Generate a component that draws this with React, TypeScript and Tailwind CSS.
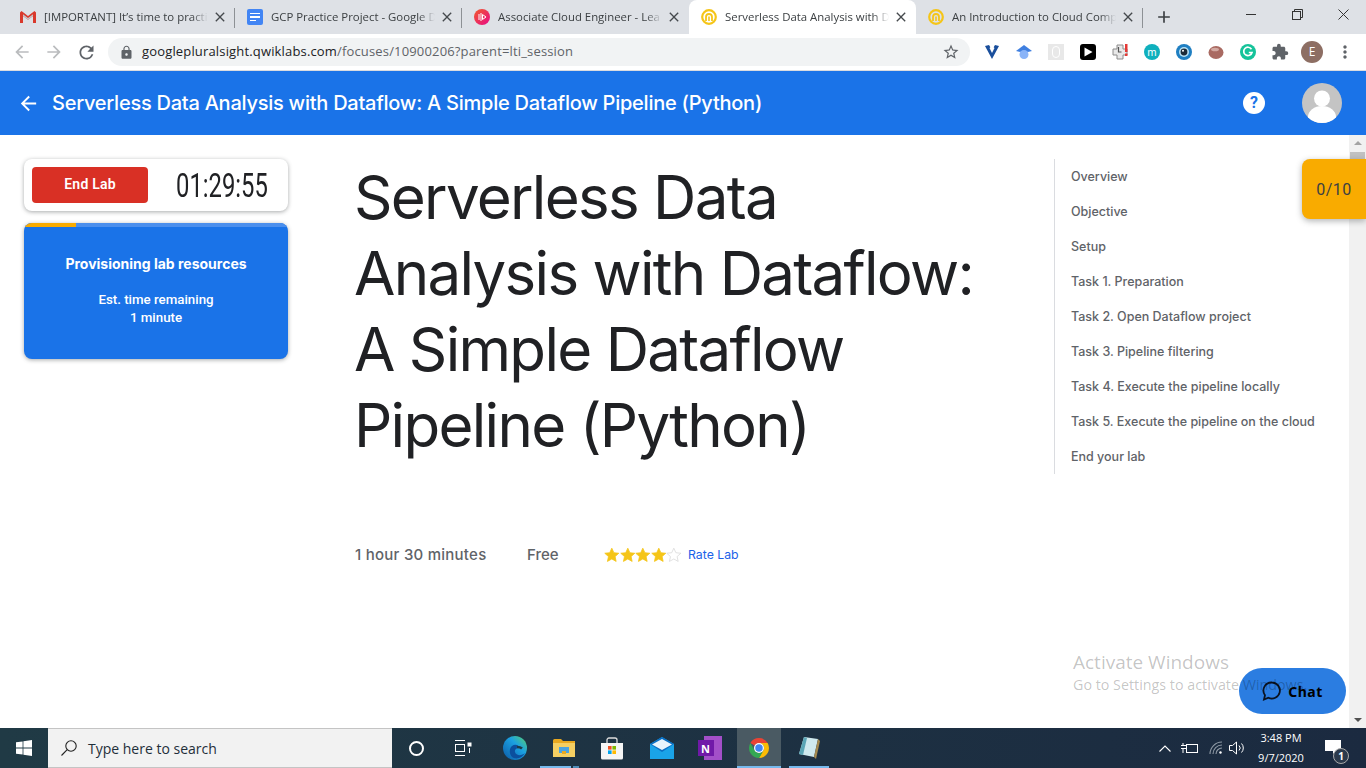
import { MdArrowBack, MdArrowForward, MdRefresh, MdLock, MdStarBorder, MdExtension, MdMoreVert, MdClose, MdAdd } from 'react-icons/md';

const uiFont = "font-['Open_Sans','Noto_Sans',sans-serif]";

function GmailIcon() {
  return (
    <svg width="16" height="12" viewBox="0 0 16 12">
      <path d="M0 1.5 L0 12 L3 12 L3 5 L8 8.8 L13 5 L13 12 L16 12 L16 1.5 L14.5 0 L8 5 L1.5 0 Z" fill="#d9392c" />
      <path d="M3 5 L3 3.2 L8 7 L13 3.2 L13 5 L8 8.8 Z" fill="#c5c6c9" />
    </svg>
  );
}

function DocsIcon() {
  return (
    <div className="w-4 h-4 rounded-[2px] bg-[#4285f4] flex flex-col gap-[2px] justify-center px-[3px]">
      <div className="h-[1.5px] bg-white" />
      <div className="h-[1.5px] bg-white" />
      <div className="h-[1.5px] w-[6px] bg-white" />
    </div>
  );
}

function PluralIcon() {
  return (
    <svg width="16" height="16" viewBox="0 0 16 16">
      <defs>
        <linearGradient id="ps" x1="0" y1="0" x2="1" y2="1">
          <stop offset="0" stopColor="#f15b2a" />
          <stop offset="1" stopColor="#e80a89" />
        </linearGradient>
      </defs>
      <circle cx="8" cy="8" r="8" fill="url(#ps)" />
      <path d="M5 5v6M7 4v8" stroke="#fff" strokeWidth="1" />
      <path d="M8.5 5.5 L12 8 L8.5 10.5 Z" fill="none" stroke="#fff" strokeWidth="1" />
    </svg>
  );
}

function QwikIcon() {
  return (
    <svg width="16" height="16" viewBox="0 0 16 16">
      <circle cx="8" cy="8" r="6.8" fill="none" stroke="#f5c518" strokeWidth="2.2" />
      <path d="M5 12V8a3 3 0 0 1 6 0v4" fill="none" stroke="#f5c518" strokeWidth="1.8" />
      <path d="M8 7.5V12" stroke="#f5c518" strokeWidth="1.6" />
    </svg>
  );
}

type TabProps = { icon: React.ReactNode; title: string; active?: boolean; sep?: boolean };

function Tab({ icon, title, active, sep }: TabProps) {
  return (
    <div className={`relative w-[227px] h-[34px] shrink-0 flex items-center pl-3 pr-[7px] ${active ? 'bg-white rounded-t-lg' : ''}`}>
      <div className="w-4 flex justify-center shrink-0">{icon}</div>
      <span className="ml-2 flex-1 whitespace-nowrap overflow-hidden text-[11.4px] text-[#3c4043] [mask-image:linear-gradient(to_right,black_90%,transparent)]">{title}</span>
      <MdClose className="ml-1 shrink-0 text-[#45494d]" size={16} />
      {sep && <div className="absolute right-0 top-[8px] h-[20px] w-px bg-[#8d9195]" />}
    </div>
  );
}

function ExtSlot({ children }: { children: React.ReactNode }) {
  return <div className="w-8 h-8 flex items-center justify-center shrink-0">{children}</div>;
}

function Extensions() {
  return (
    <div className="flex items-center ml-[6px]">
      <ExtSlot>
        <svg width="16" height="16" viewBox="0 0 16 16">
          <path d="M1 2 L5 1 L8 6 L11 1 L15 2 L8 15 Z" fill="#1a4f9c" />
          <path d="M5.5 4 L8 9 L10.5 4 L8 2 Z" fill="#fff" />
        </svg>
      </ExtSlot>
      <ExtSlot>
        <svg width="16" height="16" viewBox="0 0 16 16">
          <path d="M8 1 L16 7 L8 9 L0 7 Z" fill="#3f7fe0" />
          <circle cx="8" cy="10.5" r="4.5" fill="#8ab4f8" />
        </svg>
      </ExtSlot>
      <ExtSlot>
        <div className="w-4 h-4 bg-[#e8e8e8] flex items-center justify-center">
          <div className="w-2 h-3 rounded-full border border-white" />
        </div>
      </ExtSlot>
      <ExtSlot>
        <div className="w-4 h-4 rounded-[3px] bg-black flex items-center justify-center">
          <svg width="10" height="10" viewBox="0 0 10 10"><path d="M1.5 0.5 L9.5 5 L1.5 9.5 Z" fill="#fff" /></svg>
        </div>
      </ExtSlot>
      <ExtSlot>
        <svg width="16" height="16" viewBox="0 0 16 16">
          <path d="M5 1h6v4h4v6h-4v4H5v-4H1V5h4Z" fill="#e8e8e8" stroke="#8c8c8c" strokeWidth="1" />
          <path d="M6.5 3v5h3" fill="none" stroke="#555" strokeWidth="1.2" />
          <rect x="13" y="0" width="2.5" height="8" fill="#e53935" />
          <rect x="13" y="9.5" width="2.5" height="2.5" fill="#e53935" />
        </svg>
      </ExtSlot>
      <ExtSlot>
        <div className="w-4 h-4 rounded-full bg-[#0fb0bd] flex items-center justify-center text-white text-[10px] leading-none font-['Noto_Sans',sans-serif]">m</div>
      </ExtSlot>
      <ExtSlot>
        <svg width="16" height="16" viewBox="0 0 16 16">
          <circle cx="8" cy="8" r="8" fill="#1f7fc2" />
          <circle cx="8" cy="8" r="5" fill="#b9e2f5" />
          <circle cx="8" cy="8" r="3.4" fill="#1d2b38" />
          <circle cx="7" cy="6.8" r="1" fill="#fff" />
        </svg>
      </ExtSlot>
      <ExtSlot>
        <svg width="16" height="14" viewBox="0 0 16 14">
          <ellipse cx="8" cy="7.5" rx="7.5" ry="6.5" fill="#a96a62" />
          <ellipse cx="7" cy="4.5" rx="4" ry="1.8" fill="#d3a9a2" />
        </svg>
      </ExtSlot>
      <ExtSlot>
        <svg width="16" height="16" viewBox="0 0 16 16">
          <circle cx="8" cy="8" r="8" fill="#15c39a" />
          <path d="M11.5 5.2A4.2 4.2 0 1 0 12 8.5H8.8" fill="none" stroke="#fff" strokeWidth="1.7" />
        </svg>
      </ExtSlot>
      <ExtSlot>
        <MdExtension className="text-[#5f6368]" size={18} />
      </ExtSlot>
      <div className="w-8 h-8 flex items-center justify-center shrink-0">
        <div className={`w-[22px] h-[22px] rounded-full bg-[#8d6e63] flex items-center justify-center text-white text-[12px] ${uiFont}`}>E</div>
      </div>
      <MdMoreVert className="ml-[7px] text-[#5f6368]" size={20} />
    </div>
  );
}

function BrowserChrome() {
  return (
    <div className={`shrink-0 ${uiFont}`}>
      <div className="h-[34px] bg-[#dee1e6] flex pl-2">
        <Tab icon={<GmailIcon />} title="[IMPORTANT] It’s time to practi" sep />
        <Tab icon={<DocsIcon />} title="GCP Practice Project - Google D" sep />
        <Tab icon={<PluralIcon />} title="Associate Cloud Engineer - Lea" />
        <Tab icon={<QwikIcon />} title="Serverless Data Analysis with D" active />
        <Tab icon={<QwikIcon />} title="An Introduction to Cloud Comp" sep />
        <div className="w-[42px] h-[34px] flex items-center justify-center">
          <MdAdd className="text-[#3c4043]" size={20} />
        </div>
        <div className="ml-auto flex h-[28px] text-[#3c4043]">
          <div className="w-[46px] flex items-center justify-center">
            <div className="w-[10px] h-px bg-[#333]" />
          </div>
          <div className="w-[46px] flex items-center justify-center">
            <svg width="11" height="11" viewBox="0 0 11 11" fill="none" stroke="#333">
              <rect x="0.5" y="2.5" width="8" height="8" />
              <path d="M2.5 2.5V0.5H10.5V8.5H8.5" />
            </svg>
          </div>
          <div className="w-[46px] flex items-center justify-center">
            <svg width="11" height="11" viewBox="0 0 11 11" stroke="#333"><path d="M0.5 0.5 L10.5 10.5 M10.5 0.5 L0.5 10.5" /></svg>
          </div>
        </div>
      </div>
      <div className="h-[37px] bg-white flex items-center border-b border-[#dadce0]">
        <div className="w-[108px] flex items-center pl-[12px] gap-[12px] shrink-0">
          <MdArrowBack className="text-[#babcbe]" size={20} />
          <MdArrowForward className="text-[#babcbe]" size={20} />
          <MdRefresh className="text-[#5f6368]" size={21} />
        </div>
        <div className="w-[862px] h-[28px] rounded-full bg-[#f1f3f4] flex items-center pl-[11px] pr-[10px] shrink-0">
          <MdLock className="text-[#5f6368]" size={15} />
          <span className="ml-[8px] text-[13px] text-[#202124] tracking-[0.16px]">
            googlepluralsight.qwiklabs.com<span className="text-[#5f6368]">/focuses/10900206?parent=lti_session</span>
          </span>
          <MdStarBorder className="ml-auto text-[#5f6368]" size={18} />
        </div>
        <Extensions />
      </div>
    </div>
  );
}

function Star({ filled }: { filled: boolean }) {
  return (
    <svg width="16" height="16" viewBox="0 0 24 24" className="w-[15.6px]">
      <path
        d="M12 1.5l3.2 7 7.6.8-5.7 5.1 1.6 7.5L12 18.1l-6.7 3.8 1.6-7.5L1.2 9.3l7.6-.8Z"
        fill={filled ? '#f5c518' : '#fff'}
        stroke={filled ? '#f5c518' : '#d8d8d8'}
        strokeWidth="1.2"
      />
    </svg>
  );
}

const tocItems = [
  'Overview',
  'Objective',
  'Setup',
  'Task 1. Preparation',
  'Task 2. Open Dataflow project',
  'Task 3. Pipeline filtering',
  'Task 4. Execute the pipeline locally',
  'Task 5. Execute the pipeline on the cloud',
  'End your lab',
];

function LabContent() {
  return (
    <div className="relative flex-1 min-h-0 flex bg-white font-['Inter',sans-serif]">
      <div className="flex-1 flex pt-6 pl-6 min-w-0">
        <aside className="w-[264px] shrink-0">
          <div className="h-[52px] rounded-lg bg-white shadow-[0_1px_4px_rgba(60,64,67,0.45)] flex items-center pl-2">
            <div className="w-[116px] h-9 shrink-0 rounded bg-[#d93025] flex items-center justify-center pb-px text-white text-[14px] font-semibold font-['Roboto',sans-serif] tracking-[0.2px]">End Lab</div>
            <div className="ml-[28px] shrink-0 inline-block origin-left scale-x-[0.7] text-[34px] leading-none text-[#202124] font-['Roboto',sans-serif] whitespace-nowrap">01:29:55</div>
          </div>
          <div className="mt-3 h-[136px] rounded-lg overflow-hidden bg-[#1a73e8] shadow-[0_1px_4px_rgba(60,64,67,0.45)] text-white text-center">
            <div className="h-1 bg-[#4b8fed]">
              <div className="h-1 w-[52px] bg-[#f9ab00]" />
            </div>
            <div className="mt-[27px] text-[14px] leading-5 font-bold">Provisioning lab resources</div>
            <div className="mt-[17px] text-[13.3px] leading-[18px] font-medium font-['Roboto',sans-serif]">
              Est. time remaining
              <br />1 minute
            </div>
          </div>
        </aside>
        <main className="ml-[66px] w-[701px] shrink-0">
          <h1 className="w-[650px] text-[60px] leading-[76px] tracking-[-1.7px] text-[#202124] font-normal">
            Serverless Data Analysis with Dataflow: A Simple Dataflow Pipeline (Python)
          </h1>
          <div className="mt-[81px] pl-px flex items-center text-[#5f6368]">
            <span className="w-[172px] text-[15px] font-medium tracking-[0.25px] whitespace-nowrap">1 hour 30 minutes</span>
            <span className="w-[77px] text-[15px] font-medium">Free</span>
            <div className="flex">
              <Star filled />
              <Star filled />
              <Star filled />
              <Star filled />
              <Star filled={false} />
            </div>
            <span className="ml-[6px] text-[12.3px] text-[#1a62e8]">Rate Lab</span>
          </div>
        </main>
        <nav className="ml-[-1px] w-[295px] h-[315px] border-l border-[#dadce0] pl-[16px] pt-px flex flex-col text-[12.5px] text-[#5f6368] font-medium">
          {tocItems.map((item) => (
            <div key={item} className="h-[35px] shrink-0 flex items-center whitespace-nowrap">{item}</div>
          ))}
        </nav>
      </div>
      <div className="w-[17px] shrink-0 bg-[#f1f1f1] flex flex-col items-center justify-between py-[6px] relative">
        <div className="flex flex-col items-center">
          <div className="w-0 h-0 border-x-[4px] border-x-transparent border-b-[4px] border-b-[#a3a3a3]" />
          <div className="mt-[7px] w-[15px] h-[60px] bg-[#c1c1c1]" />
        </div>
        <div className="w-0 h-0 border-x-[4px] border-x-transparent border-t-[4px] border-t-[#505050]" />
      </div>
      <div className="absolute right-0 top-[24px] w-16 h-[60px] pt-px rounded-l-lg bg-[#f9ab00] shadow-[0_2px_6px_rgba(60,64,67,0.4)] flex items-center justify-center text-[16px] text-[#3c4043] font-['Roboto',sans-serif] tracking-[0.5px]">0/10</div>
      <div className="absolute left-[1239px] top-[533px] w-[107px] h-[46px] rounded-full bg-[#2b7de1] flex items-center justify-center gap-[6px] text-black font-bold text-[14px] font-['Noto_Sans',sans-serif] tracking-[0.5px]">
        <svg width="20" height="20" viewBox="0 0 20 20" fill="none" stroke="#0b1320" strokeWidth="1.8">
          <path d="M10 1.5a8 8 0 1 1-3.6 15.2L2 18.5l1-4.3A8 8 0 0 1 10 1.5Z" />
        </svg>
        Chat
      </div>
      <div className={`absolute left-[1073px] top-[514px] text-[rgba(0,0,0,0.24)] pointer-events-none ${uiFont}`}>
        <div className="text-[19px] leading-[26px]">Activate Windows</div>
        <div className="text-[14.3px] leading-[20px] whitespace-nowrap">Go to Settings to activate Windows.</div>
      </div>
    </div>
  );
}

function Taskbar() {
  return (
    <div className={`h-10 shrink-0 flex items-center bg-gradient-to-r from-[#203a45] to-[#1b2a40] text-white ${uiFont}`}>
      <div className="w-12 h-10 flex items-center justify-center shrink-0">
        <svg width="16" height="16" viewBox="0 0 16 16" fill="#fff">
          <path d="M0 2.3 6.6 1.4V7.6H0ZM7.4 1.3 16 0V7.6H7.4ZM0 8.4H6.6V14.6L0 13.7ZM7.4 8.4H16V16L7.4 14.7Z" />
        </svg>
      </div>
      <div className="w-[344px] h-10 bg-[#f2f2f2] border-y border-[#c4c4c4] flex items-center pl-[12px] text-[#1f2f3a] shrink-0">
        <svg width="18" height="18" viewBox="0 0 18 18" fill="none" stroke="#222" strokeWidth="1.1">
          <circle cx="11" cy="7" r="5.2" />
          <path d="M7.2 10.6 1.5 16.5" />
        </svg>
        <span className="ml-[10px] text-[14px]">Type here to search</span>
      </div>
      <div className="w-[48px] flex items-center justify-center shrink-0">
        <div className="w-[15px] h-[15px] rounded-full border-2 border-white" />
      </div>
      <div className="w-[46px] flex items-center justify-center shrink-0">
        <svg width="17" height="16" viewBox="0 0 17 16" fill="none" stroke="#fff" strokeWidth="1">
          <path d="M0 0.5H10M0 15.5H10" />
          <rect x="0.5" y="4.5" width="9" height="7" />
          <rect x="13" y="3" width="3" height="3" fill="#fff" />
          <path d="M14.5 8V13" />
        </svg>
      </div>
      <div className="w-[58px] h-10 flex items-center justify-center shrink-0">
        <svg width="24" height="24" viewBox="0 0 24 24">
          <defs>
            <linearGradient id="edge" x1="0" y1="1" x2="1" y2="0">
              <stop offset="0" stopColor="#0c59a4" />
              <stop offset="0.6" stopColor="#1ba1e2" />
              <stop offset="1" stopColor="#5ad26a" />
            </linearGradient>
          </defs>
          <circle cx="12" cy="12" r="12" fill="url(#edge)" />
          <path d="M22 17c-3 3-9 3-10-1-.6-2.4 1.5-4.5 5-4-1-3-5-4.5-8-2-3 2.5-3 8 0 11 2 1.8 9 3 13-4Z" fill="#0b4f9e" />
          <path d="M14 11c2 0 4 .5 5 1.5" stroke="#203a45" strokeWidth="2.5" fill="none" />
        </svg>
      </div>
      <div className="relative w-[40px] h-10 flex items-center justify-center shrink-0">
        <svg width="22" height="18" viewBox="0 0 22 18">
          <path d="M0 1.5A1.5 1.5 0 0 1 1.5 0H8l2 2H22V18H0Z" fill="#e8a820" />
          <rect y="4" width="22" height="14" fill="#f5cf62" />
          <rect x="6" y="8" width="10" height="6" fill="#4ba3e0" />
          <rect x="9" y="12" width="4" height="3" fill="#e8a820" />
        </svg>
        <div className="absolute bottom-0 left-[-4px] w-[31px] h-[2px] bg-[#76b9ed]" />
        <div className="absolute bottom-0 left-[29px] w-[6px] h-[2px] bg-[#4f8db8]" />
      </div>
      <div className="w-[56px] flex items-center justify-center shrink-0">
        <svg width="24" height="24" viewBox="0 0 24 24">
          <path d="M7 7V4a2 2 0 0 1 2-2h6a2 2 0 0 1 2 2v3" fill="none" stroke="#ddd" strokeWidth="1.3" />
          <path d="M1 7h22v15a1.5 1.5 0 0 1-1.5 1.5h-19A1.5 1.5 0 0 1 1 22Z" fill="#f5f5f5" />
          <rect x="8" y="10" width="3.6" height="3.6" fill="#f25022" />
          <rect x="12.4" y="10" width="3.6" height="3.6" fill="#7fba00" />
          <rect x="8" y="14.4" width="3.6" height="3.6" fill="#00a4ef" />
          <rect x="12.4" y="14.4" width="3.6" height="3.6" fill="#ffb900" />
        </svg>
      </div>
      <div className="w-[43px] flex items-center justify-center shrink-0">
        <svg width="24" height="22" viewBox="0 0 24 22">
          <path d="M0 7 12 0 24 7V22H0Z" fill="#1aa3e8" />
          <path d="M0 7 12 15 24 7 12 0Z" fill="#0b6fc4" />
          <path d="M2 7.5 12 2l10 5.5-10 5.5Z" fill="#e8f4fc" />
        </svg>
      </div>
      <div className="w-[53px] flex items-center justify-center shrink-0">
        <div className="relative w-[24px] h-[24px]">
          <div className="absolute right-0 top-0 w-[18px] h-[24px] bg-[#a34fc9]" />
          <div className="absolute left-0 top-[4px] w-[16px] h-[16px] bg-[#7019a8] flex items-center justify-center text-white text-[11px] font-bold leading-none">N</div>
        </div>
      </div>
      <div className="relative w-[44px] h-10 bg-[#4a5a63] flex items-center justify-center shrink-0 ml-[1px]">
        <svg width="24" height="24" viewBox="0 0 48 48">
          <path d="M24 4A20 20 0 0 1 41.32 14H24A10 10 0 0 0 15.34 19L6.68 14A20 20 0 0 1 24 4Z" fill="#ea4335" />
          <path d="M41.32 14A20 20 0 0 1 24 44L32.66 29A10 10 0 0 0 24 14Z" fill="#fbbc05" />
          <path d="M24 44A20 20 0 0 1 6.68 14L15.34 29A10 10 0 0 0 32.66 29Z" fill="#34a853" />
          <circle cx="24" cy="24" r="10" fill="#fff" />
          <circle cx="24" cy="24" r="7.5" fill="#4285f4" />
        </svg>
        <div className="absolute bottom-0 inset-x-0 h-[2px] bg-[#76b9ed]" />
      </div>
      <div className="relative ml-[8px] w-[40px] h-10 flex items-center justify-center shrink-0">
        <svg width="22" height="24" viewBox="0 0 22 24">
          <path d="M6 1 20 3 16 21 1 18Z" fill="#cfe9ee" />
          <path d="M1 18 6 1 9 2 5 19Z" fill="#5aa5b5" />
          <path d="M20 3 22 5 18 23 16 21Z" fill="#a58a4f" />
        </svg>
        <div className="absolute bottom-0 inset-x-0 h-[2px] bg-[#76b9ed]" />
      </div>
      <div className="ml-auto flex items-center h-10">
        <svg width="12" height="7" viewBox="0 0 12 7" fill="none" stroke="#fff" strokeWidth="1.1"><path d="M0.5 6.5 6 1l5.5 5.5" /></svg>
        <svg className="ml-[10px]" width="17" height="12" viewBox="0 0 17 12" fill="none" stroke="#fff" strokeWidth="1">
          <rect x="5.5" y="2.5" width="11" height="8" />
          <path d="M0 3.5H5M0 6.5H5M2 1V3.5M2 6.5V11" />
        </svg>
        <svg className="ml-[11px]" width="14" height="14" viewBox="0 0 14 14" fill="none" stroke="#8f9aa5" strokeWidth="1.1">
          <path d="M1 13A12 12 0 0 1 13 1M4 13A9 9 0 0 1 13 4M7 13A6 6 0 0 1 13 7" />
          <circle cx="11.5" cy="11.5" r="1.2" fill="#fff" stroke="none" />
        </svg>
        <svg className="ml-[6px]" width="16" height="14" viewBox="0 0 16 14" fill="none" stroke="#fff" strokeWidth="1">
          <path d="M0.5 4.5H3.5L7.5 1V13L3.5 9.5H0.5Z" />
          <path d="M10 4.5a3.5 3.5 0 0 1 0 5M12.5 2.5a6.5 6.5 0 0 1 0 9" />
        </svg>
        <div className="w-[64px] ml-[4px] text-center text-[11px] leading-[20px]">
          3:48 PM
          <br />9/7/2020
        </div>
        <div className="relative w-[40px] mr-[13px] flex items-center justify-center pb-[2px]">
          <svg width="16" height="15" viewBox="0 0 16 15" fill="#fff">
            <path d="M0 0H16V11H11L8 14V11H0Z" />
          </svg>
          <div className="absolute left-[20px] top-[8px] w-[16px] h-[16px] rounded-full bg-[#2c3a4c] border border-[#aaa] flex items-center justify-center text-[10px] leading-none font-bold">1</div>
        </div>
      </div>
    </div>
  );
}

export default function App() {
  return (
    <div className="w-[1366px] h-[768px] overflow-hidden flex flex-col">
      <BrowserChrome />
      <div className="h-16 shrink-0 bg-[#1a73e8] flex items-center text-white font-['Inter',sans-serif]">
        <MdArrowBack className="ml-[17px]" size={23} />
        <span className="ml-[12px] text-[20px] font-medium tracking-[-0.25px] whitespace-nowrap">
          Serverless Data Analysis with Dataflow: A Simple Dataflow Pipeline (Python)
        </span>
        <div className="ml-auto w-[22px] h-[22px] rounded-full bg-white flex items-center justify-center text-[#1a73e8] text-[16px] font-bold font-['Roboto',sans-serif]">?</div>
        <div className="ml-[37px] mr-[24px] w-10 h-10 rounded-full bg-[#c4c4c4] overflow-hidden">
          <svg width="40" height="40" viewBox="0 0 40 40" fill="#fff">
            <circle cx="20" cy="15.5" r="8" />
            <ellipse cx="20" cy="34" rx="14" ry="11" />
          </svg>
        </div>
      </div>
      <LabContent />
      <Taskbar />
    </div>
  );
}
